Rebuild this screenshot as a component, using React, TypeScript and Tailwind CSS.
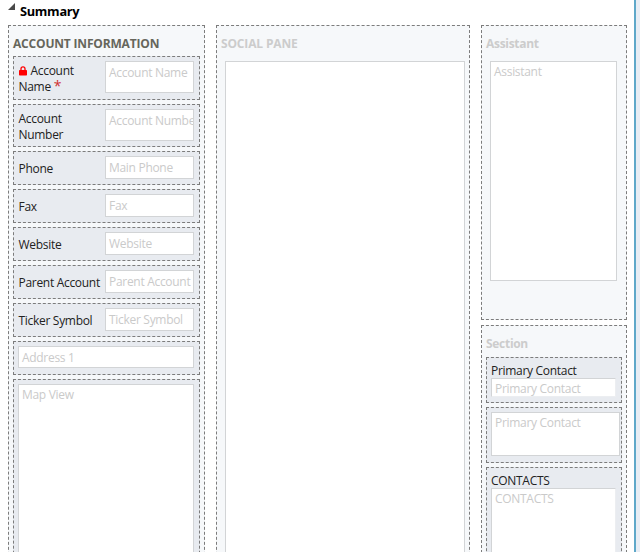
import type { ReactNode } from "react"
import clsx from "clsx"

function Section({ title, titleClass = "text-[#cccccc]", className, children }: { title: string; titleClass?: string; className?: string; children?: ReactNode }) {
    return (
        <section className={clsx("flex flex-col border border-dashed border-[#7c7c7c] bg-[#f6f8fa] px-1 pt-[9px]", className)}>
            <h2 className={clsx("h-[21px] shrink-0 leading-[18px] font-bold whitespace-nowrap", titleClass)}>{title}</h2>
            {children}
        </section>
    )
}

function Cell({ className, children }: { className?: string; children: ReactNode }) {
    return (
        <div className={clsx("shrink-0 border border-dashed border-[#7c7c7c] bg-[#e8ebf0] p-1", className)}>
            {children}
        </div>
    )
}

function Box({ text, className }: { text?: string; className?: string }) {
    return (
        <div className={clsx("overflow-hidden border border-[#d2d4d6] bg-white pl-[3px] whitespace-nowrap text-[#cacaca]", className)}>
            {text}
        </div>
    )
}

function LockIcon() {
    return (
        <svg className="mr-1 inline-block h-[10px] w-2 align-[-1px]" viewBox="0 0 8 10" fill="none">
            <path d="M2 5V2.8C2 1.5 2.8 .8 4 .8S6 1.5 6 2.8V5" stroke="#ff0000" strokeWidth="1.3" />
            <rect y="4" width="8" height="5.5" rx=".7" fill="#ff0000" />
        </svg>
    )
}

const fields = [
    { label: "Phone", placeholder: "Main Phone" },
    { label: "Fax", placeholder: "Fax" },
    { label: "Website", placeholder: "Website" },
    { label: "Parent Account", placeholder: "Parent Account" },
    { label: "Ticker Symbol", placeholder: "Ticker Symbol" },
]

export default function App() {
    return (
        <div className="flex h-[552px] w-[640px] overflow-hidden bg-white font-['Open_Sans','Noto_Sans',sans-serif] text-[12px] tracking-[-0.3px] text-[#222222]">
            <main className="flex w-[634px] shrink-0 flex-col pl-2">
                <header className="flex h-[25px] shrink-0">
                    <svg className="mt-[3px] h-[7px] w-[7px]" viewBox="0 0 7 7">
                        <path d="M7 0V7H0Z" fill="#4a4a4a" />
                    </svg>
                    <h1 className="ml-[5px] pt-[2px] text-[12.8px] leading-[18px] font-bold text-black">Summary</h1>
                </header>

                <div className="flex h-[560px] shrink-0 gap-[11px]">
                    <Section title="ACCOUNT INFORMATION" titleClass="text-[12px] tracking-[-0.18px] text-[#66665c]" className="w-[197px]">
                        <div className="flex flex-col gap-1">
                            <Cell className="flex h-11">
                                <div className="w-[87px] shrink-0 pt-[2px] pl-[0.5px] leading-4">
                                    <LockIcon />Account<br />Name<span className="ml-[3px] text-[14px] leading-none text-[#d03030]">*</span>
                                </div>
                                <Box text="Account Name" className="h-8 w-[89px] leading-[21px]" />
                            </Cell>
                            <Cell className="flex h-[43px]">
                                <div className="w-[87px] shrink-0 pt-[2px] pl-[0.5px] leading-4">Account<br />Number</div>
                                <Box text="Account Number" className="h-8 w-[89px] leading-[21px]" />
                            </Cell>

                            {fields.map((field) => (
                                <Cell key={field.label} className="flex h-[34px]">
                                    <div className="w-[87px] shrink-0 pt-[2px] pl-[0.5px] leading-[22px] whitespace-nowrap">{field.label}</div>
                                    <Box text={field.placeholder} className="h-[23px] w-[89px] leading-[21px]" />
                                </Cell>
                            ))}

                            <Cell className="h-[34px]">
                                <Box text="Address 1" className="h-[22px] w-44 leading-[21px]" />
                            </Cell>
                            <Cell className="h-[200px]">
                                <Box text="Map View" className="h-full w-44 leading-[20px]" />
                            </Cell>
                        </div>
                    </Section>

                    <Section title="SOCIAL PANE" titleClass="text-[12px] tracking-[-0.15px] text-[#cccccc]" className="w-[254px]">
                        <Box className="mt-[5px] ml-1 w-[240px] flex-1" />
                    </Section>

                    <div className="flex w-[146px] flex-col gap-[5px]">
                        <Section title="Assistant" className="h-[295px] shrink-0">
                            <Box text="Assistant" className="mt-[5px] ml-1 h-[220px] w-[127px] leading-[19px]" />
                        </Section>

                        <Section title="Section" className="flex-1">
                            <div className="mt-px flex w-[136px] flex-col gap-1">
                                <Cell className="h-[46px]">
                                    <div className="h-4 leading-[18px]">Primary Contact</div>
                                    <Box text="Primary Contact" className="h-[19px] w-[125px] border-r-[#eceef1] border-b-[#eceef1] leading-[19px]" />
                                </Cell>
                                <Cell className="h-14">
                                    <Box text="Primary Contact" className="h-11 w-[129px] leading-[20px]" />
                                </Cell>
                                <Cell className="h-[140px]">
                                    <div className="h-4 leading-[18px]">CONTACTS</div>
                                    <Box text="CONTACTS" className="h-[110px] w-[125px] border-r-[#eceef1] leading-[20px]" />
                                </Cell>
                            </div>
                        </Section>
                    </div>
                </div>
            </main>

            {/* right edge of the form canvas */}
            <div className="w-[6px] border-l-2 border-[#5fa8c9] bg-[#e8edf4]" />
        </div>
    )
}
